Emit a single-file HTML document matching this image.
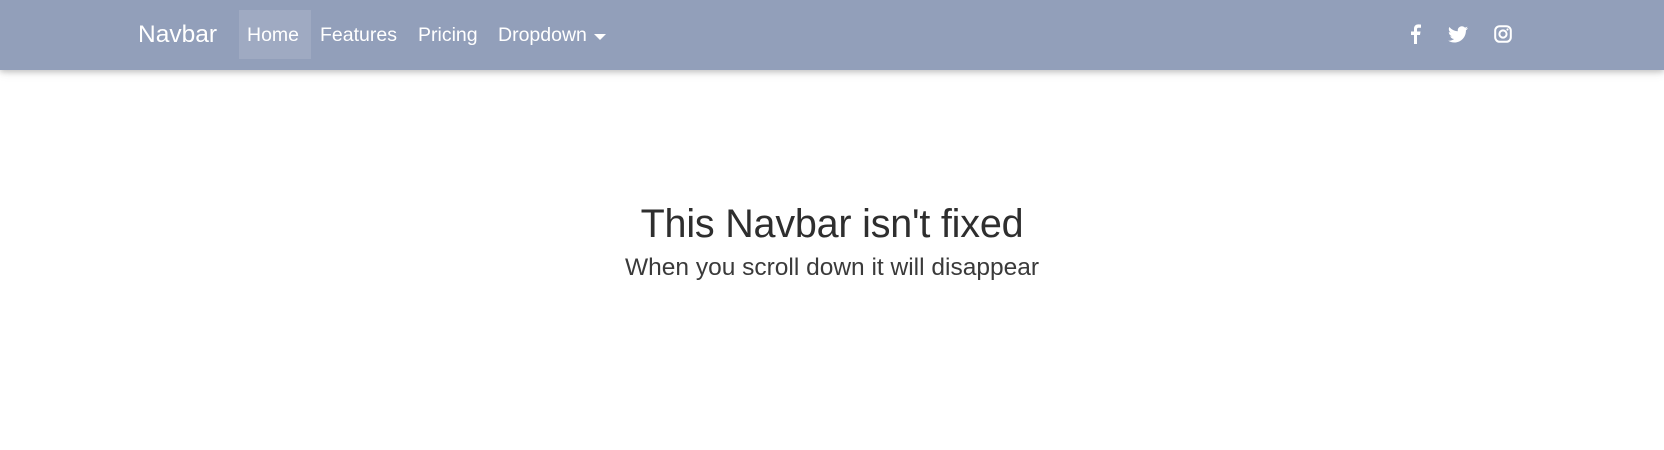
<!DOCTYPE html>
<html><head><style>
body{margin:0;width:1664px;height:450px;background:#fff;font-family:"Liberation Sans",sans-serif;overflow:hidden}
nav{position:absolute;left:0;top:0;width:1664px;height:70px;background:#929fba;box-shadow:0 2px 5px rgba(0,0,0,.16),0 2px 10px rgba(0,0,0,.12)}
.t{position:absolute;color:#fff;white-space:nowrap}
.n{font-size:19.5px;top:24px}
.home{position:absolute;left:239px;top:10px;width:72px;height:49px;background:rgba(255,255,255,.12)}
h1{position:absolute;left:0;width:1664px;top:202px;margin:0;text-align:center;font-weight:normal;font-size:39.5px;color:#2e2e2e;letter-spacing:-.2px}
p{position:absolute;left:0;width:1664px;top:254px;margin:0;text-align:center;font-size:24.5px;color:#3a3a3a}
</style></head><body>
<nav>
<div class="t" style="left:138px;top:21px;font-size:24.5px">Navbar</div>
<div class="home"></div>
<div class="t n" style="left:247px">Home</div>
<div class="t n" style="left:320px">Features</div>
<div class="t n" style="left:418px">Pricing</div>
<div class="t n" style="left:498px">Dropdown</div>
<svg style="position:absolute;left:594px;top:34px" width="12" height="7"><path d="M0 0H12L6 6Z" fill="#fff"/></svg>
<svg style="position:absolute;left:1409px;top:24px" width="12" height="20" viewBox="0 0 12 20"><path d="M8 20V11h3l.5-3.5H8V5.5c0-1 .3-1.7 1.8-1.7H12V.6C11.5.5 10.5.4 9.3.4 6.8.4 5 2 5 4.8v2.7H2V11h3v9z" fill="#fff"/></svg>
<svg style="position:absolute;left:1448px;top:26px" width="20" height="17" viewBox="0 0 24 20"><path d="M24 2.4c-.9.4-1.8.6-2.8.8 1-.6 1.8-1.6 2.2-2.7-1 .6-2 1-3.1 1.2C19.3.7 18 .1 16.6.1c-2.7 0-4.9 2.2-4.9 4.9 0 .4 0 .8.1 1.1C7.7 5.9 4.1 4 1.7 1 1.2 1.7 1 2.6 1 3.5c0 1.7.9 3.2 2.2 4.1-.8 0-1.6-.2-2.2-.6v.1c0 2.4 1.7 4.4 3.9 4.8-.4.1-.8.2-1.3.2-.3 0-.6 0-.9-.1.6 2 2.4 3.4 4.6 3.4-1.7 1.3-3.8 2.1-6.1 2.1-.4 0-.8 0-1.2-.1 2.2 1.4 4.8 2.2 7.5 2.2 9.1 0 14-7.5 14-14v-.6c1-.7 1.8-1.6 2.5-2.5z" fill="#fff"/></svg>
<svg style="position:absolute;left:1494px;top:25px" width="18" height="18" viewBox="0 0 18 18"><rect x="1.2" y="1.2" width="15.6" height="15.6" rx="4.5" fill="none" stroke="#fff" stroke-width="2"/><circle cx="9" cy="9" r="3.6" fill="none" stroke="#fff" stroke-width="2"/><circle cx="13.5" cy="4.5" r="1.1" fill="#fff"/></svg>
</nav>
<h1>This Navbar isn't fixed</h1>
<p>When you scroll down it will disappear</p>
</body></html>
